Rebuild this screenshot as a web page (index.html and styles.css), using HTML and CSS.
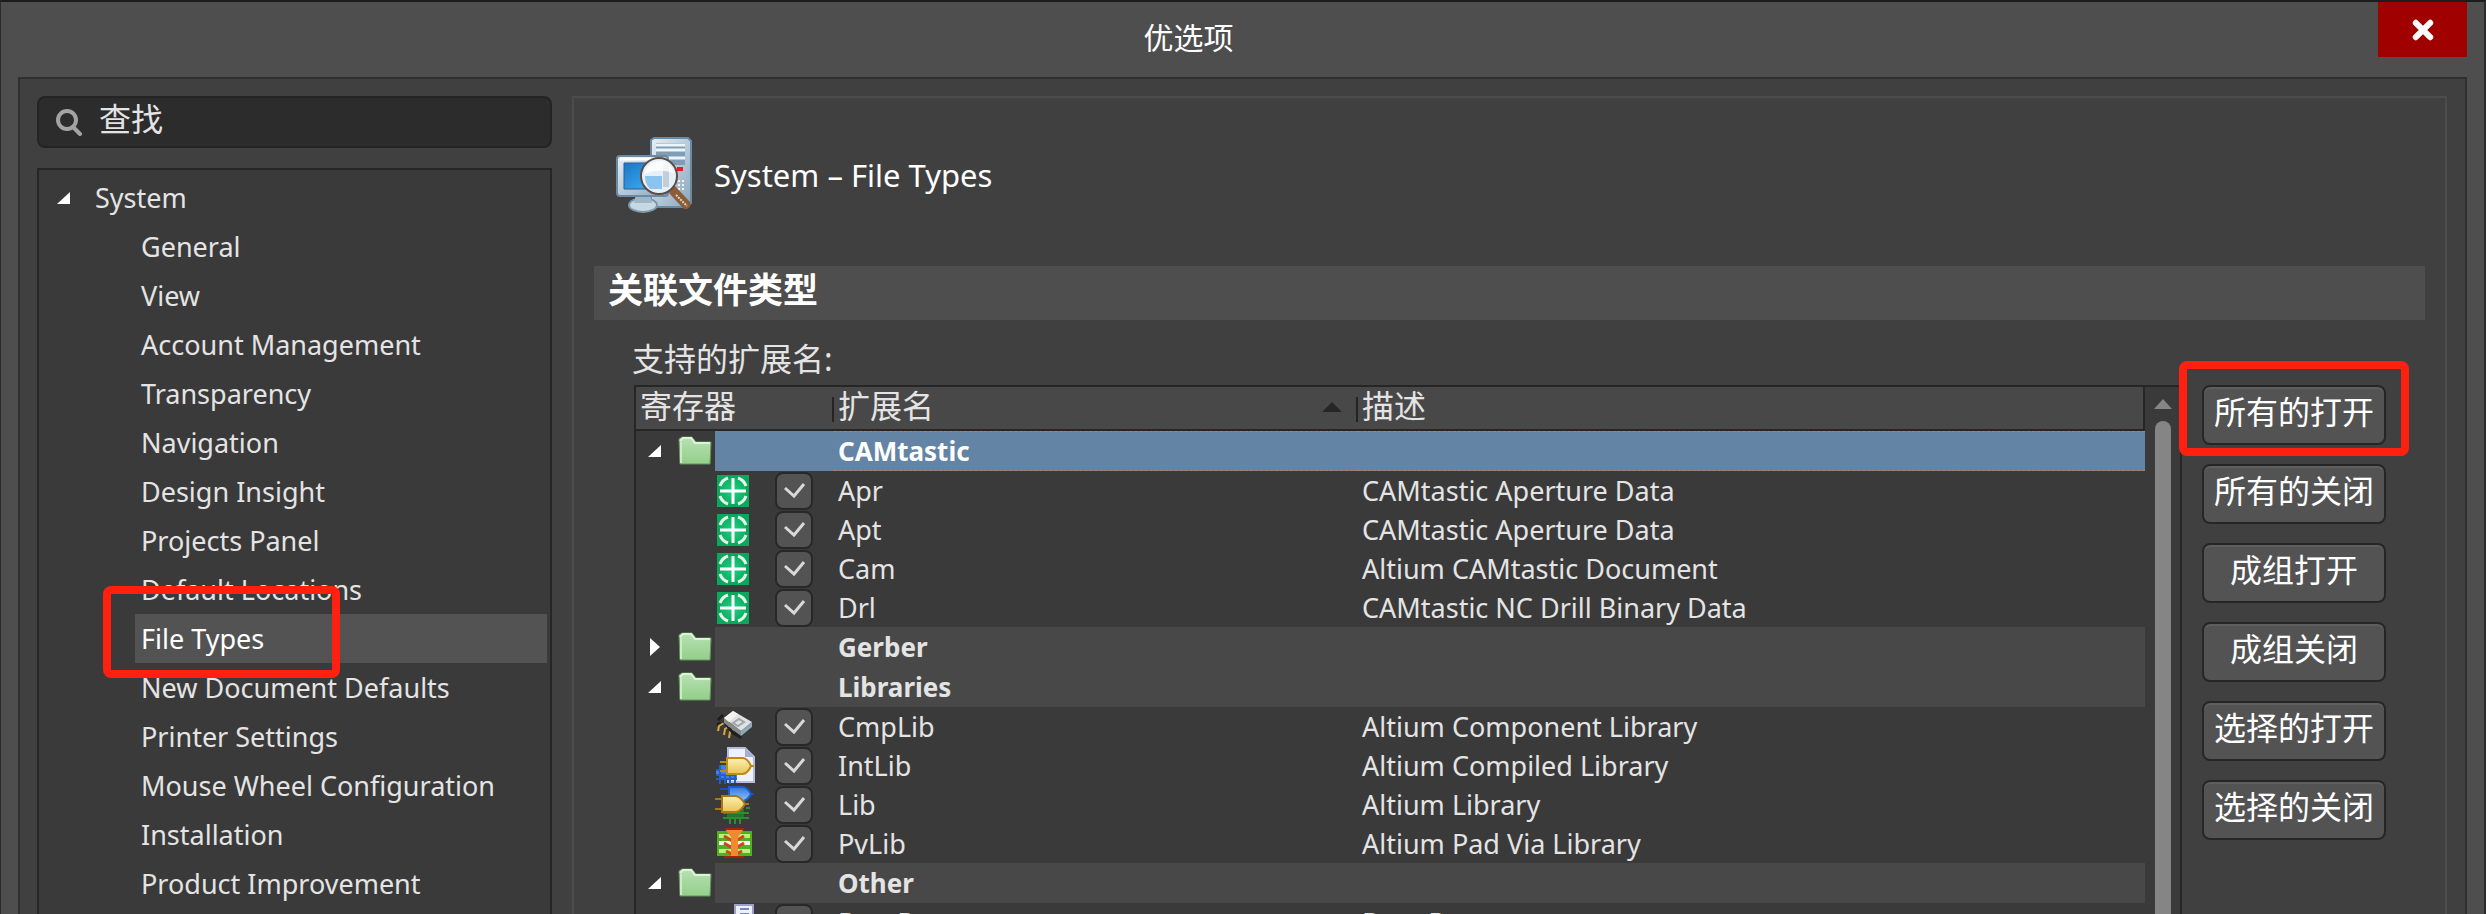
FILE: index.html
```html
<!DOCTYPE html>
<html lang="zh-CN">
<head>
    <meta charset="UTF-8">
    <meta name="viewport" content="width=device-width, initial-scale=1.0">
    <title>优选项</title>
    <link rel="stylesheet" href="styles.css">
</head>
<body>
    <!-- Iconos compartidos -->
    <svg class="sprite" aria-hidden="true">
        <defs>
            <linearGradient id="gFolder" x1="0" y1="0" x2="0" y2="1">
                <stop offset="0" stop-color="#b9e0b4"/>
                <stop offset="1" stop-color="#93cf8a"/>
            </linearGradient>
            <radialGradient id="gCam">
                <stop offset="0" stop-color="#1fd08a"/>
                <stop offset="1" stop-color="#10b060"/>
            </radialGradient>
            <linearGradient id="gScreen" x1="0" y1="0" x2="1" y2="1">
                <stop offset="0" stop-color="#1976c8"/>
                <stop offset="1" stop-color="#46b4f8"/>
            </linearGradient>
            <linearGradient id="gMetal" x1="0" y1="0" x2="1" y2="1">
                <stop offset="0" stop-color="#e6eff6"/>
                <stop offset="1" stop-color="#8aa6bd"/>
            </linearGradient>
            <linearGradient id="gGate" x1="0" y1="0" x2="0" y2="1">
                <stop offset="0" stop-color="#fff0b0"/>
                <stop offset="1" stop-color="#e8c458"/>
            </linearGradient>
            <linearGradient id="gBlue" x1="0" y1="0" x2="0" y2="1">
                <stop offset="0" stop-color="#2f78e8"/>
                <stop offset="1" stop-color="#8fc0ff"/>
            </linearGradient>
            <symbol id="open" viewBox="0 0 14 14"><path d="M13 1v12H0z" fill="#fff"/></symbol>
            <symbol id="closed" viewBox="0 0 14 20"><path d="M2 1l10 9-10 9z" fill="#fff"/></symbol>
            <symbol id="folder" viewBox="0 0 34 30">
                <path d="M1 3l3-2h10l4 5h15l-1 22H2z" fill="url(#gFolder)" stroke="#5f9a58"/>
                <path d="M2 5l3-3h8l4 5h15" fill="none" stroke="#dff3db" stroke-width="2"/>
                <path d="M3 6v21" stroke="#cdebc8" stroke-width="2"/>
            </symbol>
            <symbol id="cam" viewBox="0 0 32 32">
                <path d="M0 0h32v32H0z" fill="#0aa85c"/>
                <circle cx="16" cy="16" r="13" fill="url(#gCam)"/>
                <path d="M3 11Q5 5 11 3M21 3Q27 5 29 11M29 21Q27 27 21 29M11 29Q5 27 3 21" fill="none" stroke="#e2f8ec" stroke-width="3"/>
                <path d="M16 3v26M3 16h26" stroke="#fff" stroke-width="3"/>
            </symbol>
            <symbol id="cmp" viewBox="0 0 40 36">
                <path d="M3 11l5-5M6 14l-4 2" stroke="#1c1c1c" stroke-width="3"/>
                <path d="M9 14l-5 3-1 5M14 17l-4 3-1 6M19 20l-4 3-1 6" fill="none" stroke="#d8a83c" stroke-width="2"/>
                <path d="M6 11l14 12 7 3-1 4-9-5z" fill="#1f1f1f"/>
                <path d="M9 9l9-7 19 11-11 9z" fill="#dfe1e2"/>
                <path d="M9 9l17 13v5L9 14z" fill="#84898c"/>
                <path d="M26 22l11-9v5l-11 9z" fill="#8fa9b5"/>
                <path d="M9 9l9-7 5 3-9 8z" fill="#f4f2f0"/>
                <path d="M18 14l6-4 5 3-6 4z" fill="none" stroke="#9fa7ab" stroke-width="2"/>
            </symbol>
            <symbol id="int" viewBox="0 0 40 38">
                <path d="M13 1h17l9 9v25H13z" fill="#eef2ff" stroke="#b4bce0" stroke-width="2"/>
                <path d="M30 1v9h9z" fill="#aab0cc"/>
                <path d="M4 18h12v6h6v9H6v-5H1v-6h3z" fill="#3f82e0"/>
                <path d="M5 18v19M10 28v9M15 28v9M20 28v8M1 23h6M1 28h20M1 32h21" stroke="#2360c4" stroke-width="2"/>
                <path d="M5 15h8M5 24h8M35 19h4" stroke="#c08a18" stroke-width="2"/>
                <path d="M12 11h16q5 1 8 8-3 7-8 8H12z" fill="url(#gGate)" stroke="#c08a18" stroke-width="2"/>
            </symbol>
            <symbol id="lib" viewBox="0 0 40 38">
                <path d="M5 3h10M34 8h5" stroke="#1450c0" stroke-width="2"/>
                <path d="M14 1h14q5 1 8 7-3 6-8 7H14z" fill="url(#gBlue)" stroke="#1e5cc8" stroke-width="2"/>
                <path d="M12 23h17v10H12z" fill="#1f7a28"/>
                <path d="M8 27h26M8 32h26M31 22h4M15 32v6M20 32v6M25 32v6" stroke="#2a8e34" stroke-width="2"/>
                <path d="M0 13h8M0 23h8M29 18h5" stroke="#a87818" stroke-width="2"/>
                <path d="M7 10h14q5 1 9 8-4 7-9 8H7z" fill="url(#gGate)" stroke="#a87818" stroke-width="2"/>
            </symbol>
            <symbol id="pv" viewBox="0 0 40 38">
                <path d="M2 6h35v25H2z" fill="#50b020"/>
                <path d="M4 11h31M4 26h31" stroke="#b8f080" stroke-width="4"/>
                <path d="M4 18h31" stroke="#f4f4f0" stroke-width="4"/>
                <path d="M9 11l10 6 10-6M9 18l10 6 10-6M11 26l8 4 8-4" fill="none" stroke="#d04818" stroke-width="3"/>
                <path d="M10 4h19l-6 8v19h-7V12z" fill="#f08a30"/>
                <path d="M10 4h19M9 32h20" stroke="#a82008" stroke-width="2"/>
            </symbol>
            <symbol id="doc" viewBox="0 0 40 38">
                <path d="M1 11h20v26H1z" fill="#f0dc9c" stroke="#c8a868" stroke-width="2"/>
                <path d="M20 1h18v28H20z" fill="#eef1fc" stroke="#9aa2cc" stroke-width="2"/>
                <path d="M25 5h9M25 10h9M25 15h9" stroke="#7c86b8" stroke-width="2"/>
            </symbol>
        </defs>
    </svg>

    <div class="window">
        <header class="titlebar">
            <h1>优选项</h1>
            <button type="button" class="close-btn" aria-label="关闭">
                <svg viewBox="0 0 20 20"><path d="M4 4l12 12M16 4L4 16" stroke="#fff" stroke-width="5" stroke-linecap="round"/></svg>
            </button>
        </header>

        <div class="content">
            <aside class="sidebar">
                <div class="search">
                    <svg viewBox="0 0 28 28" aria-hidden="true"><circle cx="12" cy="12" r="9" fill="none" stroke="#a3a3a3" stroke-width="4"/><path d="M18 19l7 7" stroke="#a3a3a3" stroke-width="4" stroke-linecap="round"/></svg>
                    <input type="text" aria-label="查找" placeholder="查找">
                </div>
                <nav class="tree">
                    <a href="#system" class="root"><svg><use href="#open"/></svg>System</a>
                    <a href="#general">General</a>
                    <a href="#view">View</a>
                    <a href="#account">Account Management</a>
                    <a href="#transparency">Transparency</a>
                    <a href="#navigation">Navigation</a>
                    <a href="#insight">Design Insight</a>
                    <a href="#projects">Projects Panel</a>
                    <a href="#locations">Default Locations</a>
                    <a href="#filetypes" class="selected">File Types<span class="mark mark-tree"></span></a>
                    <a href="#defaults">New Document Defaults</a>
                    <a href="#printer">Printer Settings</a>
                    <a href="#wheel">Mouse Wheel Configuration</a>
                    <a href="#installation">Installation</a>
                    <a href="#improvement">Product Improvement</a>
                </nav>
            </aside>

            <main class="page">
                <div class="page-head">
                    <svg viewBox="0 0 76 76" aria-hidden="true">
                        <path d="M35 3l3-2h34l3 3v62l-4 4H35z" fill="url(#gMetal)" stroke="#6d8aa3" stroke-width="2"/>
                        <path d="M40 6h29v22H40z" fill="#7f9db6"/>
                        <path d="M40 8h29M40 13h29M40 21h29" stroke="#eef5fa" stroke-width="3"/>
                        <path d="M61 30h6v4h-6z" fill="#f01818"/>
                        <path d="M54 44h16M54 48h16M54 52h16" stroke="#eef5fa" stroke-width="2" stroke-dasharray="2 2"/>
                        <ellipse cx="27" cy="68" rx="14" ry="7" fill="#c8d8e2" stroke="#7c98ac" stroke-width="2"/>
                        <path d="M20 57h14l2 9H18z" fill="#9fb8c8"/>
                        <rect x="1" y="19" width="51" height="40" rx="3" fill="url(#gMetal)" stroke="#6d8aa3" stroke-width="2"/>
                        <path d="M4 22h44" stroke="#fff" stroke-width="3"/>
                        <path d="M8 26h38v26H8z" fill="url(#gScreen)" stroke="#2a5f92"/>
                        <path d="M55 53l4-4 15 16q2 5-3 7-3 1-5-2L53 56z" fill="#8a5c38"/>
                        <path d="M60 58l11 11" stroke="#e8d4c0" stroke-width="2" stroke-dasharray="2 1"/>
                        <circle cx="43" cy="39" r="18" fill="#e6f0f8" stroke="#5c4c44" stroke-width="2"/>
                        <path d="M29 39h17v13H34q-5-5-5-13z" fill="#8cc4f0"/>
                        <path d="M47 28h6v22h-6z" fill="#c4ced8"/>
                        <path d="M28 37q4-14 18-13 9 2 12 12-16-5-30 1z" fill="#fff" opacity=".8"/>
                    </svg>
                    <h2>System – File Types</h2>
                </div>

                <h3 class="section">关联文件类型</h3>

                <p class="label" id="extLabel">支持的扩展名:</p>
                <div class="area">
                    <div class="list">
                        <table aria-labelledby="extLabel">
                            <thead>
                                <tr><th class="reg">寄存器</th><th class="ext">扩展名<svg class="sort" viewBox="0 0 20 10"><path d="M0 10L10 0l10 10z" fill="#262626"/></svg></th><th>描述</th></tr>
                            </thead>
                            <tbody>
                                <tr class="group active"><td><svg class="arrow"><use href="#open"/></svg><svg class="folder"><use href="#folder"/></svg></td><td>CAMtastic</td><td></td></tr>
                                <tr><td><svg class="type"><use href="#cam"/></svg><input type="checkbox" aria-label="Apr" checked></td><td>Apr</td><td>CAMtastic Aperture Data</td></tr>
                                <tr><td><svg class="type"><use href="#cam"/></svg><input type="checkbox" aria-label="Apt" checked></td><td>Apt</td><td>CAMtastic Aperture Data</td></tr>
                                <tr><td><svg class="type"><use href="#cam"/></svg><input type="checkbox" aria-label="Cam" checked></td><td>Cam</td><td>Altium CAMtastic Document</td></tr>
                                <tr><td><svg class="type"><use href="#cam"/></svg><input type="checkbox" aria-label="Drl" checked></td><td>Drl</td><td>CAMtastic NC Drill Binary Data</td></tr>
                                <tr class="group"><td><svg class="arrow"><use href="#closed"/></svg><svg class="folder"><use href="#folder"/></svg></td><td>Gerber</td><td></td></tr>
                                <tr class="group"><td><svg class="arrow"><use href="#open"/></svg><svg class="folder"><use href="#folder"/></svg></td><td>Libraries</td><td></td></tr>
                                <tr><td><svg class="type wide"><use href="#cmp"/></svg><input type="checkbox" aria-label="CmpLib" checked></td><td>CmpLib</td><td>Altium Component Library</td></tr>
                                <tr><td><svg class="type wide"><use href="#int"/></svg><input type="checkbox" aria-label="IntLib" checked></td><td>IntLib</td><td>Altium Compiled Library</td></tr>
                                <tr><td><svg class="type wide"><use href="#lib"/></svg><input type="checkbox" aria-label="Lib" checked></td><td>Lib</td><td>Altium Library</td></tr>
                                <tr><td><svg class="type wide"><use href="#pv"/></svg><input type="checkbox" aria-label="PvLib" checked></td><td>PvLib</td><td>Altium Pad Via Library</td></tr>
                                <tr class="group"><td><svg class="arrow"><use href="#open"/></svg><svg class="folder"><use href="#folder"/></svg></td><td>Other</td><td></td></tr>
                                <tr><td><svg class="type wide"><use href="#doc"/></svg><input type="checkbox" aria-label="BomDoc" checked></td><td>BomDoc</td><td>Bom Document</td></tr>
                            </tbody>
                        </table>
                        <div class="scrollbar">
                            <svg viewBox="0 0 18 10" aria-hidden="true"><path d="M0 10L9 0l9 10z" fill="#858585"/></svg>
                            <div class="thumb"></div>
                        </div>
                    </div>
                    <div class="actions">
                        <button type="button">所有的打开<span class="mark mark-button"></span></button>
                        <button type="button">所有的关闭</button>
                        <button type="button">成组打开</button>
                        <button type="button">成组关闭</button>
                        <button type="button">选择的打开</button>
                        <button type="button">选择的关闭</button>
                    </div>
                </div>
            </main>
        </div>
    </div>
</body>
</html>
```

FILE: styles.css
```css
:root {
    --frame: #4e4e4e;
    --panel: #404040;
    --list: #3a3a3a;
    --line: #262626;
    --text: #e4e4e4;
    --mark: #ff2010;
}

* {
    margin: 0;
    padding: 0;
    box-sizing: border-box;
}

body {
    font-family: 'Noto Sans', 'Noto Sans CJK SC', sans-serif;
    font-size: 27px;
    color: var(--text);
    background: var(--frame);
}

button,
input {
    font-family: inherit;
    color: inherit;
}

svg {
    display: block;
    flex: none;
}

.sprite {
    position: absolute;
    width: 0;
    height: 0;
}

.window {
    display: flex;
    flex-direction: column;
    height: 100vh;
    overflow: hidden;
    border: 1px solid #2b2b2b;
    border-top: 2px solid #1c1c1c;
    border-right: 2px solid #2b2b2b;
    border-bottom: none;
}

/* Title bar */
.titlebar {
    position: relative;
    flex: none;
    height: 75px;
    padding: 14px 108px 0 0;
    text-align: center;
}

.titlebar h1 {
    font-size: 30px;
    font-weight: 400;
    line-height: 44px;
    color: #fff;
}

.close-btn {
    position: absolute;
    top: 0;
    right: 17px;
    width: 89px;
    height: 55px;
    display: flex;
    align-items: center;
    justify-content: center;
    background: #a00000;
    border: none;
}

.close-btn svg {
    width: 24px;
    height: 24px;
}

.content {
    flex: 1;
    min-height: 0;
    display: flex;
    gap: 20px;
    margin: 0 17px;
    padding: 17px 17px 0;
    background: var(--panel);
    border: 2px solid #303030;
    border-bottom: none;
}

/* Sidebar */
.sidebar {
    flex: none;
    width: 515px;
    display: flex;
    flex-direction: column;
    gap: 20px;
}

.search {
    display: flex;
    align-items: center;
    gap: 16px;
    height: 52px;
    padding: 0 16px;
    background: #2c2c2c;
    border: 2px solid #242424;
    border-radius: 8px;
}

.search svg {
    width: 28px;
    height: 28px;
}

.search input {
    flex: 1;
    min-width: 0;
    height: 46px;
    padding-bottom: 8px;
    font-size: 32px;
    background: none;
    border: none;
    outline: none;
}

.search input::placeholder {
    color: var(--text);
}

.tree {
    flex: 1;
    padding: 3px 3px 0;
    background: var(--list);
    border: 2px solid var(--line);
    border-bottom: none;
}

.tree a {
    position: relative;
    display: block;
    height: 49px;
    margin-left: 93px;
    padding-left: 6px;
    line-height: 49px;
    color: inherit;
    text-decoration: none;
    white-space: nowrap;
}

.tree .root {
    display: flex;
    align-items: center;
    gap: 24px;
    margin-left: 9px;
}

.tree .root svg {
    width: 14px;
    height: 14px;
}

.tree .selected {
    background: #535353;
    color: #fff;
}

.mark {
    position: absolute;
    border: 8px solid var(--mark);
    border-radius: 8px;
    pointer-events: none;
    z-index: 2;
}

.mark-tree {
    left: -32px;
    top: -28px;
    width: 237px;
    height: 92px;
}

/* Page */
.page {
    flex: 1;
    min-width: 0;
    display: flex;
    flex-direction: column;
    padding: 0 20px;
    border: 2px solid #4c4c4c;
    border-bottom: none;
    margin-right: 1px;
}

.page-head {
    display: flex;
    align-items: center;
    gap: 22px;
    height: 76px;
    margin: 39px 0 53px 22px;
}

.page-head svg {
    width: 76px;
    height: 76px;
}

.page-head h2 {
    font-size: 31px;
    font-weight: 400;
    color: #fff;
}

.section {
    height: 54px;
    padding-left: 14px;
    background: var(--frame);
    font-size: 35px;
    font-weight: 700;
    line-height: 48px;
    color: #fff;
}

.label {
    height: 65px;
    padding: 19px 0 0 38px;
    font-size: 32px;
    line-height: 40px;
}

.area {
    flex: 1;
    min-height: 0;
    display: flex;
    align-items: stretch;
    gap: 20px;
    padding: 0 39px 0 40px;
}

.list {
    flex: 1;
    min-width: 0;
    display: flex;
    overflow: hidden;
    background: var(--list);
    border: 2px solid var(--line);
    border-bottom: none;
}

table {
    flex: 1;
    align-self: flex-start;
    table-layout: fixed;
    border-collapse: separate;
    border-spacing: 0;
}

th {
    position: relative;
    height: 44px;
    padding-left: 4px;
    background: #484848;
    border-bottom: 2px solid var(--line);
    font-size: 32px;
    font-weight: 400;
    line-height: 38px;
    text-align: left;
    vertical-align: top;
}

th::before {
    content: '';
    position: absolute;
    left: -2px;
    top: 10px;
    width: 2px;
    height: 25px;
    background: #242424;
}

th:first-child::before {
    display: none;
}

th:last-child {
    border-right: 2px solid var(--line);
}

.reg {
    width: 198px;
}

.ext {
    width: 524px;
}

.sort {
    position: absolute;
    right: 16px;
    top: 15px;
    width: 20px;
    height: 10px;
}

td {
    height: 39px;
    padding-left: 4px;
    line-height: 38px;
    white-space: nowrap;
}

td:first-child {
    display: flex;
    align-items: center;
    padding-left: 81px;
}

td input {
    appearance: none;
    width: 38px;
    height: 38px;
    margin-left: 26px;
    background: #535353 url("data:image/svg+xml,%3Csvg xmlns='http://www.w3.org/2000/svg' viewBox='0 0 33 33'%3E%3Cpath d='M7 14l9 8 10-12' fill='none' stroke='%23d8d8d8' stroke-width='3'/%3E%3C/svg%3E") center / 33px 33px no-repeat;
    border: 2px solid #282828;
    border-radius: 8px;
}

.type {
    width: 32px;
    height: 32px;
}

.type.wide {
    width: 40px;
    height: 38px;
    margin: 0 -6px 0 -2px;
}

.group td {
    height: 40px;
    background: #484848;
    font-size: 26px;
    font-weight: 700;
}

.group td:first-child {
    padding-left: 12px;
    background: linear-gradient(to right, var(--list) 79px, #484848 79px);
}

.group.active td {
    background: #6384a4;
    color: #fff;
    border-top: 1px dashed #b08060;
    border-bottom: 1px dashed #b08060;
}

.group.active td:first-child {
    background: linear-gradient(to right, var(--list) 79px, #6384a4 79px);
    border: none;
}

.arrow {
    width: 14px;
    height: 20px;
    margin-right: 16px;
}

.folder {
    width: 34px;
    height: 30px;
}

.scrollbar {
    flex: none;
    width: 35px;
    display: flex;
    flex-direction: column;
    align-items: center;
    gap: 12px;
    padding-top: 12px;
}

.scrollbar svg {
    width: 18px;
    height: 10px;
}

.thumb {
    flex: 1;
    width: 16px;
    background: #858585;
    border-radius: 8px 8px 0 0;
}

.actions {
    flex: none;
    width: 184px;
    display: flex;
    flex-direction: column;
    gap: 19px;
}

.actions button {
    position: relative;
    height: 60px;
    padding-bottom: 6px;
    background: #535353;
    border: 2px solid var(--line);
    border-radius: 8px;
    box-shadow: inset 0 2px #5e5e5e;
    font-size: 32px;
    line-height: 40px;
    color: #fff;
    white-space: nowrap;
}

.mark-button {
    left: -25px;
    top: -26px;
    width: 230px;
    height: 95px;
}
```
